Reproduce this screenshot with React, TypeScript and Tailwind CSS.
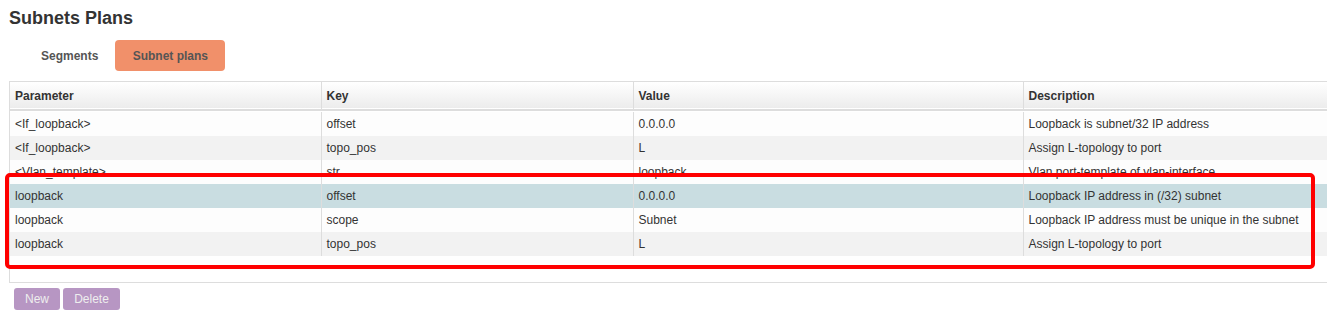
import React from "react";

type Row = { param: string; key: string; value: string; desc: string };

const rows: Row[] = [
  { param: "<If_loopback>", key: "offset", value: "0.0.0.0", desc: "Loopback is subnet/32 IP address" },
  { param: "<If_loopback>", key: "topo_pos", value: "L", desc: "Assign L-topology to port" },
  { param: "<Vlan_template>", key: "str", value: "loopback", desc: "Vlan port-template of vlan-interface" },
  { param: "loopback", key: "offset", value: "0.0.0.0", desc: "Loopback IP address in (/32) subnet" },
  { param: "loopback", key: "scope", value: "Subnet", desc: "Loopback IP address must be unique in the subnet" },
  { param: "loopback", key: "topo_pos", value: "L", desc: "Assign L-topology to port" },
];

const rowBg = ["bg-[#fdfdfd]", "bg-[#f2f2f2]", "bg-[#fdfdfd]", "bg-[#c9dde1]", "bg-[#fdfdfd]", "bg-[#f2f2f2]"];

export default function App() {
  return (
    <div className="relative h-[321px] w-[1327px] overflow-hidden bg-white font-['Liberation_Sans',Arial,sans-serif] text-[#333]">
      {/* ── Title ── */}
      <h1 className="pl-[9px] pt-[6px] text-[18px] font-bold leading-[24px] text-[#333]">Subnets Plans</h1>

      {/* ── Tabs ── */}
      <div className="mt-[10px] flex items-center pl-[27px]">
        <button className="h-[31px] pl-[14px] pr-[17px] text-[12px] font-bold text-[#555]">Segments</button>
        <button className="h-[31px] w-[110px] rounded-[4px] bg-[#f1906a] text-[12px] font-bold text-[#555]">
          Subnet plans
        </button>
      </div>

      {/* ── Grid ── */}
      <div className="ml-[9px] mt-[10px] h-[202px] w-[1340px] border border-[#dddddd]">
        <table className="w-[1340px] table-fixed border-collapse text-[12px]">
          <colgroup>
            <col className="w-[311px]" />
            <col className="w-[312px]" />
            <col className="w-[390px]" />
            <col />
          </colgroup>
          <thead>
            <tr className="h-[28px] border-b-2 border-[#dddddd] bg-gradient-to-b from-white to-[#ececec]">
              {["Parameter", "Key", "Value", "Description"].map((h, i) => (
                <th
                  key={h}
                  className={`px-[5px] text-left font-bold text-[#333] ${i > 0 ? "border-l border-[#dddddd]" : ""}`}
                >
                  {h}
                </th>
              ))}
            </tr>
          </thead>
          <tbody>
            <tr className="h-[2px]" />
            {rows.map((r, i) => (
              <tr key={i} className={`h-[24px] ${rowBg[i]}`}>
                <td className="truncate px-[5px] text-[#333]">{r.param}</td>
                <td className="truncate border-l border-[#dddddd] px-[5px] text-[#333]">{r.key}</td>
                <td className="truncate border-l border-[#dddddd] px-[5px] text-[#333]">{r.value}</td>
                <td className="truncate border-l border-[#dddddd] px-[5px] text-[#333]">{r.desc}</td>
              </tr>
            ))}
          </tbody>
        </table>
      </div>

      {/* ── Actions ── */}
      <div className="ml-[14px] mt-[5px] flex gap-[3px]">
        <button className="h-[22px] w-[46px] rounded-[3px] bg-[#b796c3] text-[12px] text-[#eee]">New</button>
        <button className="h-[22px] w-[57px] rounded-[3px] bg-[#b796c3] text-[12px] text-[#eee]">Delete</button>
      </div>

      {/* highlight frame drawn over the selection */}
      <div className="pointer-events-none absolute left-[5px] top-[173px] h-[96px] w-[1310px] rounded-[5px] border-4 border-[#ff0000]" />
    </div>
  );
}
